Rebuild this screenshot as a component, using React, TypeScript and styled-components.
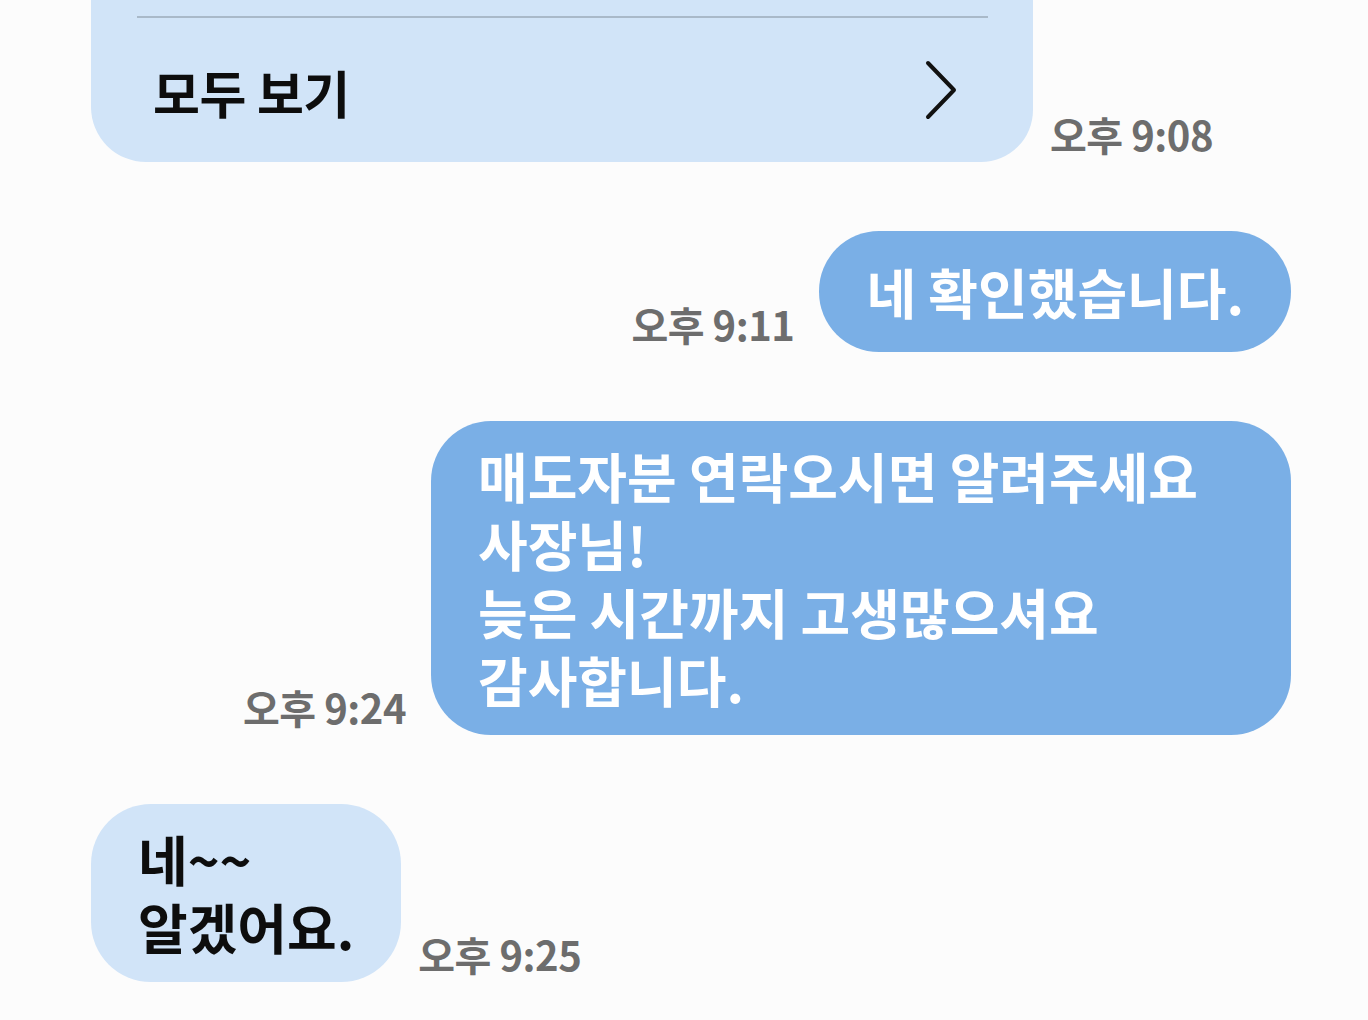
import styled, { createGlobalStyle } from 'styled-components';

const GlobalStyle = createGlobalStyle`
  html, body {
    margin: 0;
    padding: 0;
    background: #fcfcfc;
    overflow: hidden;
  }
  * {
    box-sizing: border-box;
  }
`;

type Side = 'in' | 'out';

const messages: { side: Side; text: string; time: string }[] = [
  { side: 'out', text: '네 확인했습니다.', time: '오후 9:11' },
  {
    side: 'out',
    text: '매도자분 연락오시면 알려주세요 사장님!\n늦은 시간까지 고생많으셔요\n감사합니다.',
    time: '오후 9:24'
  },
  { side: 'in', text: '네~~\n알겠어요.', time: '오후 9:25' }
];

export default function App() {
  return (
    <>
      <GlobalStyle />
      <Screen>
        <Row $side='in'>
          <ListCard>
            <Divider />
            <ViewAll>
              <ViewAllLabel>모두 보기</ViewAllLabel>
              <svg width='34' height='60' viewBox='0 0 34 60'>
                <polyline
                  points='3,3 29,30 3,57'
                  fill='none'
                  stroke='#111'
                  strokeWidth='4'
                  strokeLinecap='round'
                  strokeLinejoin='round'
                />
              </svg>
            </ViewAll>
          </ListCard>
          <Time>오후 9:08</Time>
        </Row>
        {messages.map((m, i) => (
          <Row key={i} $side={m.side}>
            {m.side === 'out' && <Time>{m.time}</Time>}
            <Bubble $side={m.side}>{m.text}</Bubble>
            {m.side === 'in' && <Time>{m.time}</Time>}
          </Row>
        ))}
      </Screen>
    </>
  );
}

const Screen = styled.div`
  width: 1368px;
  height: 1020px;
  display: flex;
  flex-direction: column;
  gap: 69px;
  padding: 0 77px 0 91px;
  font-family: 'Noto Sans CJK KR', 'Noto Sans', sans-serif;
`;

const Row = styled.div<{ $side: Side }>`
  display: flex;
  align-items: flex-end;
  justify-content: ${(p) => (p.$side === 'out' ? 'flex-end' : 'flex-start')};
  gap: ${(p) => (p.$side === 'out' ? '25px' : '17px')};
`;

const ListCard = styled.div`
  width: 942px;
  background: #d1e4f8;
  border-radius: 0 0 52px 55px;
  padding-top: 16px;
  display: flex;
  flex-direction: column;
`;

const Divider = styled.div`
  height: 2px;
  margin: 0 45px 0 46px;
  background: #a9b9c9;
`;

const ViewAll = styled.div`
  height: 144px;
  display: flex;
  align-items: center;
  justify-content: space-between;
  padding: 0 74px 0 62px;
`;

const ViewAllLabel = styled.span`
  font-size: 51px;
  font-weight: 700;
  color: #0d0d0d;
  letter-spacing: -0.5px;
  margin-top: 4px;
`;

const Bubble = styled.div<{ $side: Side }>`
  max-width: 860px;
  min-height: 121px;
  display: flex;
  align-items: center;
  padding: 21px 47px;
  border-radius: 60px;
  background: ${(p) => (p.$side === 'out' ? '#7aafe6' : '#d1e4f8')};
  color: ${(p) => (p.$side === 'out' ? '#ffffff' : '#0d0d0d')};
  font-size: 54px;
  font-weight: 700;
  line-height: 68px;
  letter-spacing: 0;
  white-space: pre-line;
  word-break: keep-all;
`;

const Time = styled.span`
  font-size: 40px;
  line-height: 40px;
  font-weight: 700;
  color: #6d6d6d;
  letter-spacing: -0.5px;
  margin-bottom: 8px;
  white-space: nowrap;
`;
